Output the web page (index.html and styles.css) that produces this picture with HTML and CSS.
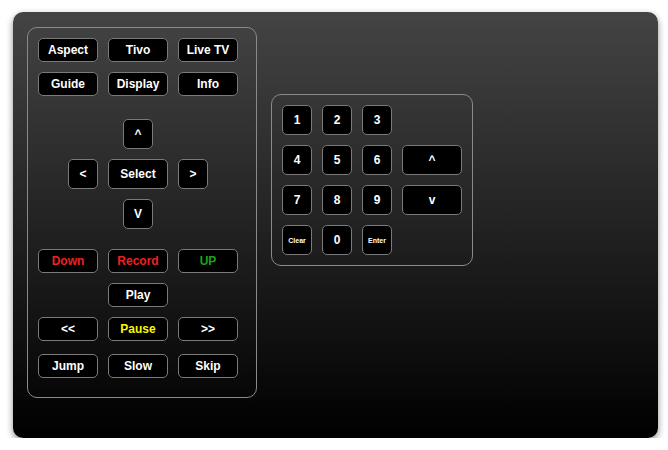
FILE: index.html
```html
<!DOCTYPE html>
<html>
<head>
<meta charset="utf-8">
<link rel="stylesheet" href="styles.css">
</head>
<body>
<div class="remote">
  <div class="panel main">
    <div class="grid3">
      <div class="btn">Aspect</div>
      <div class="btn">Tivo</div>
      <div class="btn">Live TV</div>
    </div>
    <div class="grid3 r-gap10">
      <div class="btn">Guide</div>
      <div class="btn">Display</div>
      <div class="btn">Info</div>
    </div>
    <div class="center r-gap23">
      <div class="btn sq">^</div>
    </div>
    <div class="center r-gap10">
      <div class="btn sq">&lt;</div>
      <div class="btn wide">Select</div>
      <div class="btn sq">&gt;</div>
    </div>
    <div class="center r-gap10">
      <div class="btn sq">V</div>
    </div>
    <div class="grid3 r-gap20">
      <div class="btn red">Down</div>
      <div class="btn red">Record</div>
      <div class="btn green">UP</div>
    </div>
    <div class="center r-gap10">
      <div class="btn wide">Play</div>
    </div>
    <div class="grid3 r-gap10">
      <div class="btn">&lt;&lt;</div>
      <div class="btn yellow">Pause</div>
      <div class="btn">&gt;&gt;</div>
    </div>
    <div class="grid3 r-gap13">
      <div class="btn">Jump</div>
      <div class="btn">Slow</div>
      <div class="btn">Skip</div>
    </div>
  </div>
  <div class="panel keypad">
    <div class="btn">1</div>
    <div class="btn">2</div>
    <div class="btn">3</div>
    <div class="empty"></div>
    <div class="btn">4</div>
    <div class="btn">5</div>
    <div class="btn">6</div>
    <div class="btn">^</div>
    <div class="btn">7</div>
    <div class="btn">8</div>
    <div class="btn">9</div>
    <div class="btn">v</div>
    <div class="btn tiny">Clear</div>
    <div class="btn">0</div>
    <div class="btn tiny">Enter</div>
  </div>
</div>
</body>
</html>
```
FILE: styles.css
```css
html, body {
  margin: 0;
  padding: 0;
  background: #fff;
}
body {
  font-family: "Liberation Sans", Arial, sans-serif;
}
.remote {
  box-sizing: border-box;
  margin: 12px 0 0 13px;
  width: 645px;
  height: 426px;
  border-radius: 10px;
  background: linear-gradient(to bottom, #444 0%, #000 100%);
  box-shadow: 0 3px 7px rgba(0, 0, 0, 0.45);
  padding: 15px 14px;
  display: flex;
  align-items: flex-start;
  gap: 14px;
}
.panel {
  box-sizing: border-box;
  border: 1px solid #8a8a8a;
  border-radius: 10px;
  padding: 10px;
}
.main {
  width: 230px;
  height: 371px;
  display: flex;
  flex-direction: column;
}
.grid3 {
  display: grid;
  grid-template-columns: repeat(3, 60px);
  column-gap: 10px;
}
.center {
  display: flex;
  justify-content: center;
  gap: 10px;
  width: 200px;
}
.r-gap10 { margin-top: 10px; }
.r-gap13 { margin-top: 13px; }
.r-gap20 { margin-top: 20px; }
.r-gap23 { margin-top: 23px; }
.btn {
  box-sizing: border-box;
  height: 24px;
  width: 60px;
  background: #000;
  border: 1px solid #7a7a7a;
  border-radius: 5px;
  color: #fff;
  font-weight: bold;
  font-size: 12px;
  display: flex;
  align-items: center;
  justify-content: center;
}
.btn.sq {
  width: 30px;
  height: 30px;
}
.btn.wide {
  height: 30px;
}
.center .btn.wide:only-child {
  height: 24px;
}
.red { color: #f02020; }
.green { color: #1aa31a; }
.yellow { color: #f8f800; }
.keypad {
  margin-top: 67px;
  width: 202px;
  height: 172px;
  display: grid;
  grid-template-columns: 30px 30px 30px 60px;
  grid-auto-rows: 30px;
  gap: 10px;
}
.keypad .btn {
  width: auto;
  height: 30px;
}
.btn.tiny {
  font-size: 7px;
}
```
